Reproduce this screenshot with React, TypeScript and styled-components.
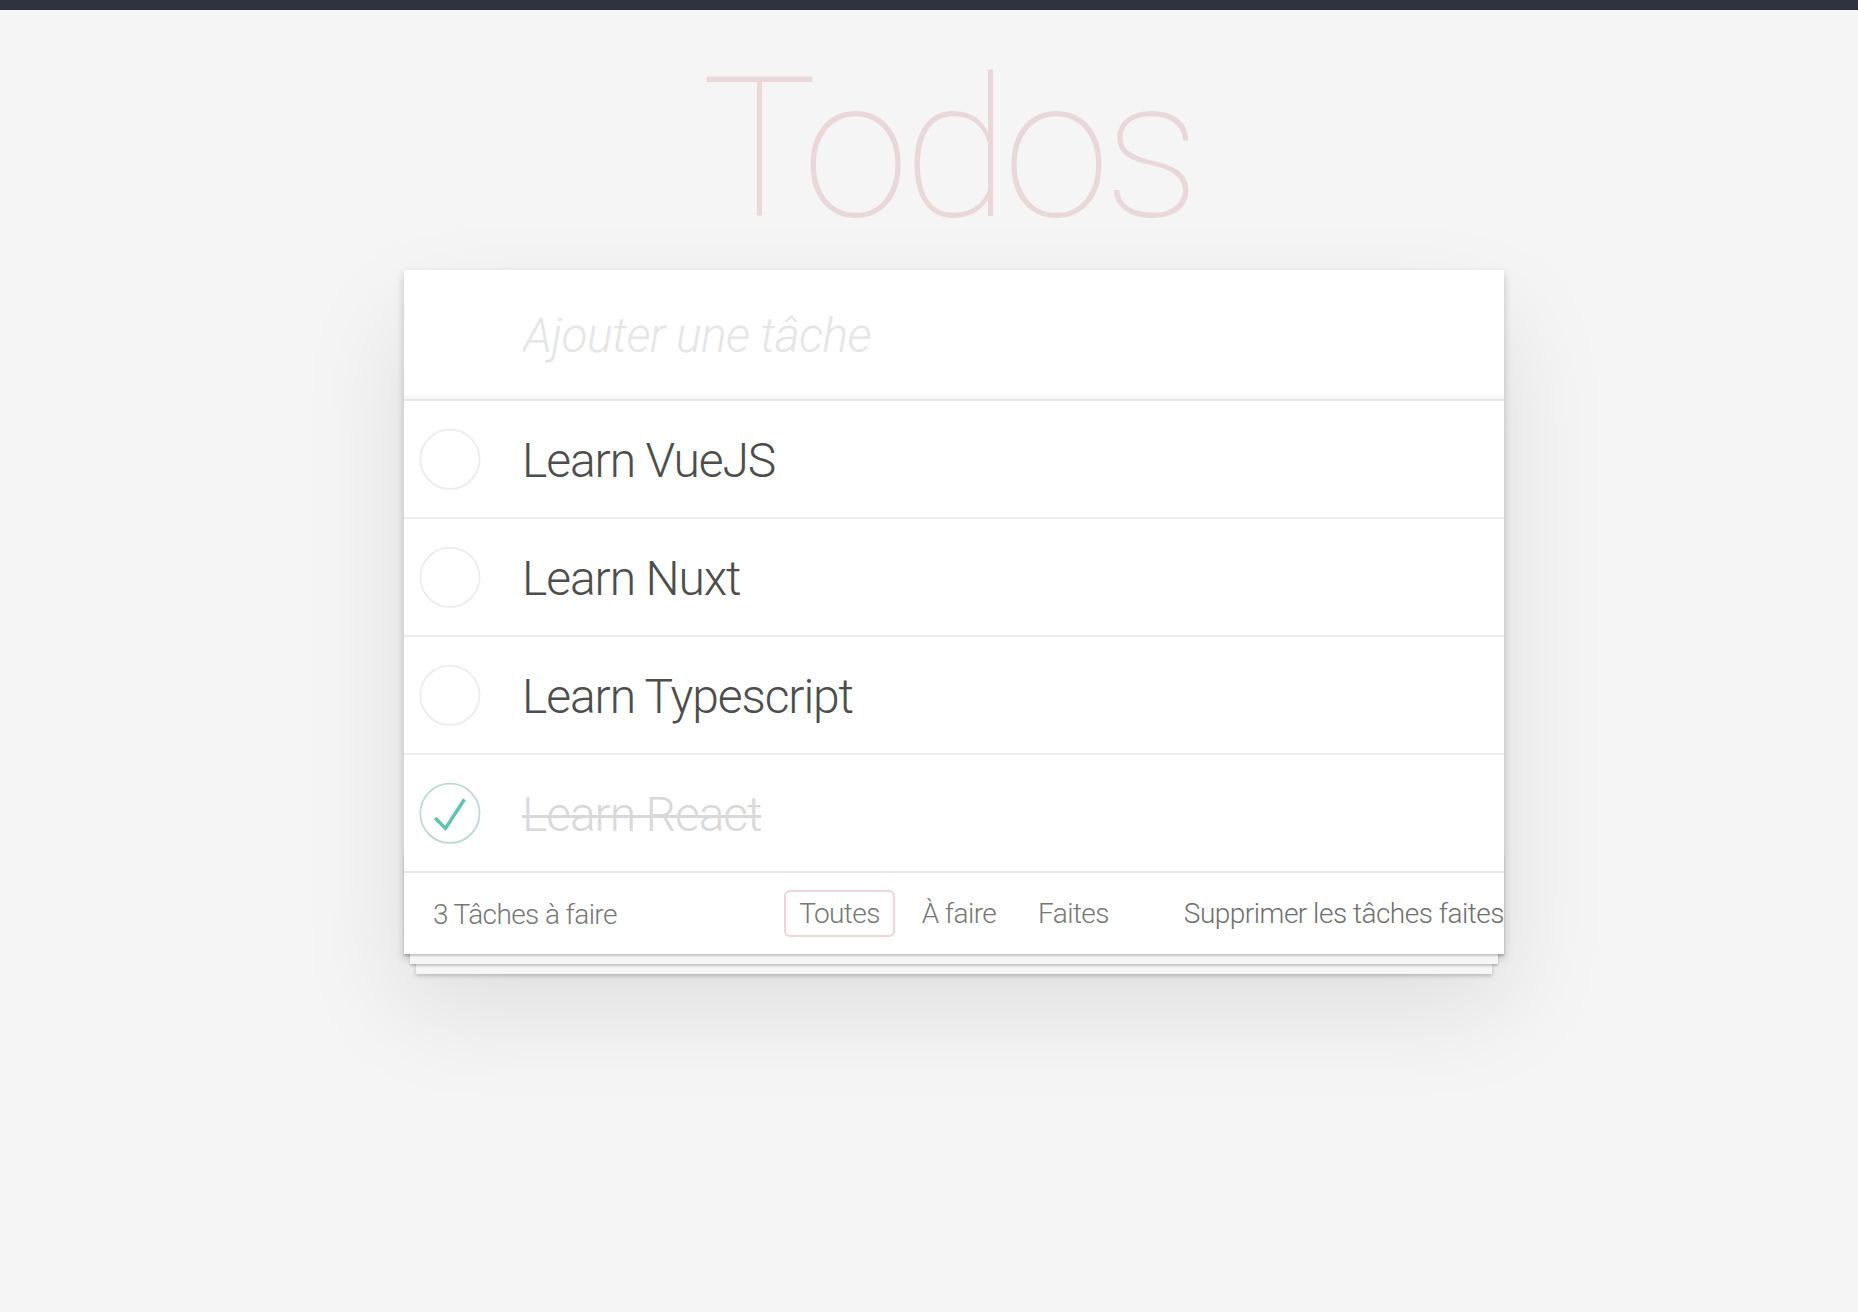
import React from "react";
import styled, { createGlobalStyle } from "styled-components";

const GlobalStyle = createGlobalStyle`
  html, body { margin: 0; padding: 0; }
  body {
    background: #f5f5f5;
    font-family: Roboto, "Liberation Sans", sans-serif;
    font-weight: 300;
    color: #4d4d4d;
    -webkit-font-smoothing: antialiased;
  }
`;

const Page = styled.div`
  min-height: 1312px;
  box-sizing: border-box;
  border-top: 10px solid #30323f;
  padding-left: 50px;
`;

const TodoApp = styled.section`
  width: 1100px;
  margin: 0 auto;
`;

const Title = styled.h1`
  margin: 41px 0 21px;
  padding-right: 12px;
  font-size: 194px;
  line-height: 198px;
  font-weight: 100;
  letter-spacing: -6px;
  text-align: center;
  color: rgba(175, 47, 47, 0.15);
`;

const Card = styled.div`
  background: #fff;
  position: relative;
  box-shadow: 0 4px 8px 0 rgba(0, 0, 0, 0.2), 0 50px 100px 0 rgba(0, 0, 0, 0.1);
`;

const NewTodo = styled.input`
  display: block;
  width: 100%;
  box-sizing: border-box;
  border: none;
  outline: none;
  background: transparent;
  padding: 32px 32px 30px 119px;
  font-family: inherit;
  font-size: 48px;
  line-height: 67px;
  height: 129px;
  font-weight: 300;
  letter-spacing: -0.6px;
  color: #4d4d4d;
  box-shadow: inset 0 -4px 2px rgba(0, 0, 0, 0.03);
  &::placeholder {
    font-style: italic;
    font-weight: 300;
    color: #e6e6e6;
  }
`;

const List = styled.ul`
  list-style: none;
  margin: 0;
  padding: 0;
  border-top: 2px solid #e6e6e6;
`;

const Item = styled.li`
  display: flex;
  align-items: center;
  border-bottom: 2px solid #ededed;
  &:last-child {
    border-bottom: none;
  }
`;

const ToggleCell = styled.div`
  width: 120px;
  flex: none;
  display: flex;
  align-items: center;
`;

const Label = styled.label<{ $done?: boolean }>`
  flex: 1;
  padding: 32px 30px 28px 0;
  margin-left: -2px;
  font-size: 48px;
  line-height: 56px;
  font-weight: 300;
  letter-spacing: -1.1px;
  color: ${(p) => (p.$done ? "#d9d9d9" : "#4d4d4d")};
  text-decoration: ${(p) => (p.$done ? "line-through" : "none")};
  text-decoration-thickness: 3px;
`;

const Footer = styled.footer`
  position: relative;
  display: grid;
  grid-template-columns: 1fr auto 1fr;
  align-items: center;
  padding: 11px 29px 11px 29px;
  border-top: 2px solid #e6e6e6;
  color: #777;
  font-size: 28px;
  letter-spacing: -0.6px;
  &::before {
    content: "";
    position: absolute;
    right: 0;
    bottom: 0;
    left: 0;
    height: 100px;
    overflow: hidden;
    pointer-events: none;
    box-shadow: 0 2px 2px rgba(0, 0, 0, 0.2), 0 16px 0 -6px #f6f6f6,
      0 18px 2px -6px rgba(0, 0, 0, 0.2), 0 32px 0 -12px #f6f6f6,
      0 34px 4px -12px rgba(0, 0, 0, 0.2);
  }
`;

const Count = styled.span`
  justify-self: start;
  padding-top: 2px;
`;

const Filters = styled.ul`
  list-style: none;
  margin: 0;
  padding: 0;
  display: flex;
`;

const FilterLink = styled.a<{ $selected?: boolean }>`
  display: block;
  margin: 6px;
  padding: 6px 13px;
  line-height: 31px;
  color: inherit;
  text-decoration: none;
  border: 2px solid ${(p) => (p.$selected ? "rgba(175, 47, 47, 0.2)" : "transparent")};
  border-radius: 6px;
`;

const Clear = styled.button`
  justify-self: end;
  margin: 0 -29px 0 0;
  border: none;
  background: none;
  padding: 0;
  font-family: inherit;
  font-size: 28px;
  font-weight: 300;
  letter-spacing: -0.5px;
  color: #6f6f6f;
  line-height: 40px;
  white-space: nowrap;
  cursor: pointer;
`;

function Toggle({ done }: { done?: boolean }) {
  return (
    <svg width="80" height="80" viewBox="-10 -18 100 135">
      <circle
        cx="50"
        cy="50"
        r="50"
        fill="none"
        stroke={done ? "#bddad5" : "#ededed"}
        strokeWidth="3"
      />
      {done && <path fill="#5dc2af" d="M72 25L42 71 27 56l-4 4 20 20 34-52z" />}
    </svg>
  );
}

const todos = [
  { title: "Learn VueJS", done: false },
  { title: "Learn Nuxt", done: false },
  { title: "Learn Typescript", done: false },
  { title: "Learn React", done: true },
];

export default function App() {
  return (
    <>
      <GlobalStyle />
      <Page>
        <TodoApp>
          <Title>Todos</Title>
          <Card>
            <NewTodo placeholder="Ajouter une tâche" />
            <List>
              {todos.map((t) => (
                <Item key={t.title}>
                  <ToggleCell>
                    <Toggle done={t.done} />
                  </ToggleCell>
                  <Label $done={t.done}>{t.title}</Label>
                </Item>
              ))}
            </List>
            <Footer>
              <Count>3 Tâches à faire</Count>
              <Filters>
                <li>
                  <FilterLink $selected>Toutes</FilterLink>
                </li>
                <li>
                  <FilterLink>À faire</FilterLink>
                </li>
                <li>
                  <FilterLink>Faites</FilterLink>
                </li>
              </Filters>
              <Clear>Supprimer les tâches faites</Clear>
            </Footer>
          </Card>
        </TodoApp>
      </Page>
    </>
  );
}
